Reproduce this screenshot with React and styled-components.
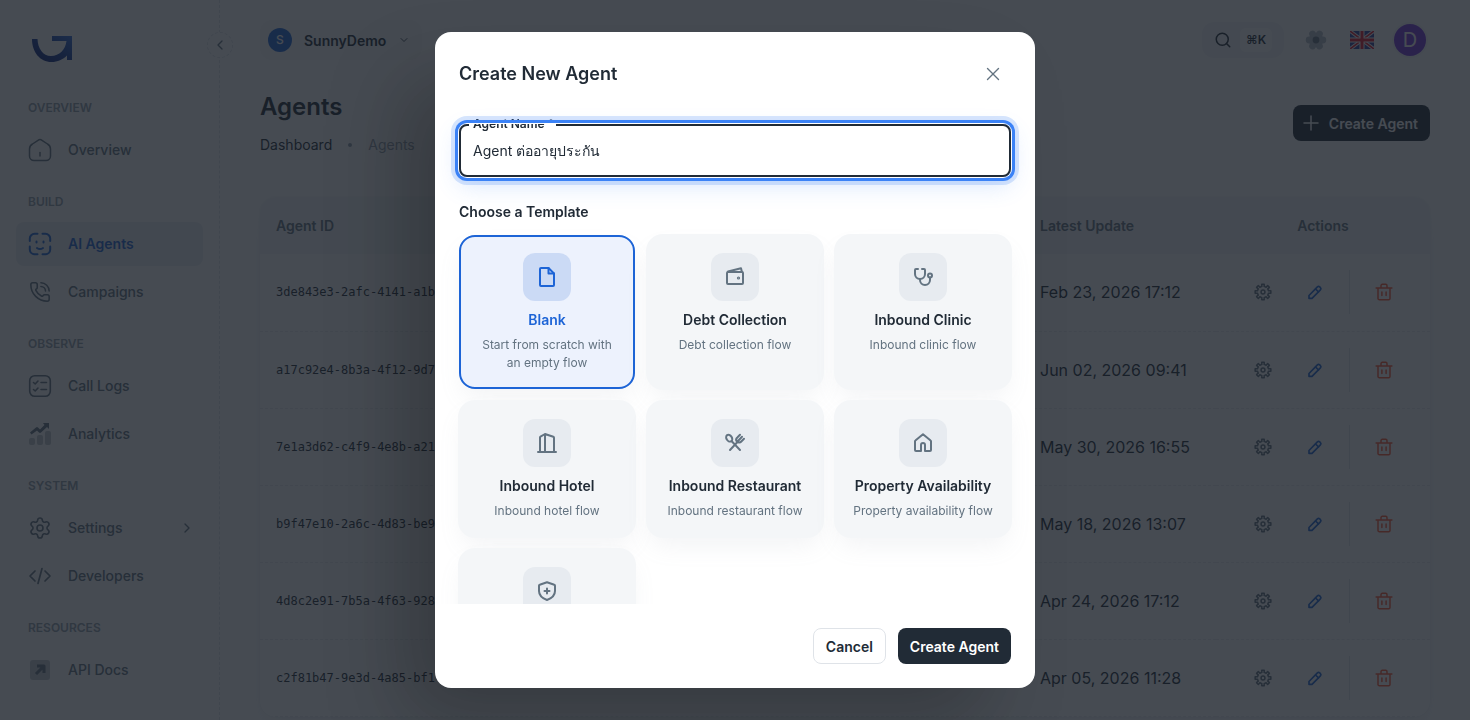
import React, { useState } from "react";
import { createGlobalStyle, styled } from "styled-components";
import { ChevronDown, ChevronLeft, ChevronRight, PhoneCall, Plus, Search, Settings, X } from "lucide-react";

const GlobalStyle = createGlobalStyle`
  * {
    box-sizing: border-box;
  }
  body {
    margin: 0;
    overflow: hidden;
    background: #ffffff;
    color: #212b36;
    font-family: Inter, "Noto Sans", sans-serif;
    font-size: 14px;
    line-height: 22px;
  }
  button, input {
    font-family: inherit;
  }
  button {
    cursor: pointer;
  }
  a {
    color: inherit;
    text-decoration: none;
  }
`;

const Line = ({ size = 24, width = 2, children }) => (
  <svg
    width={size}
    height={size}
    viewBox="0 0 24 24"
    fill="none"
    stroke="currentColor"
    strokeWidth={width}
    strokeLinecap="round"
    strokeLinejoin="round"
    aria-hidden="true"
  >
    {children}
  </svg>
);

const Logo = () => (
  <svg width="40" height="26" viewBox="0 0 40 26" aria-hidden="true">
    <defs>
      <linearGradient id="logo" x1="0" y1="1" x2="1" y2="0">
        <stop offset="0" stopColor="#0a1a6e" />
        <stop offset="0.55" stopColor="#123a9c" />
        <stop offset="1" stopColor="#2f6ad8" />
      </linearGradient>
    </defs>
    <path
      fill="url(#logo)"
      d="M0 3h5.500c.3 9.500 5.500 17 13.500 17 8.500 0 14.500-6.500 15.500-15H20V0h20v24h-5v-4.500c-4 4-9.500 6.500-15.500 6.500C8 26 0 16 0 3z"
    />
  </svg>
);

const HomeIcon = () => (
  <Line width={1.5}>
    <path d="M4.500 6 10 2.300a3.500 3.500 0 0 1 4 0L19.500 6a6 6 0 0 1 3 5v7a4.500 4.500 0 0 1-4.500 4.500H6A4.500 4.500 0 0 1 1.500 18v-7a6 6 0 0 1 3-5z" />
    <path d="M12 14.500V18" />
  </Line>
);

const AgentIcon = () => (
  <Line width={2}>
    <path d="M1.800 9V6.500A4.700 4.700 0 0 1 6.500 1.800H9.500M14.500 1.800h3a4.700 4.700 0 0 1 4.700 4.700V9M22.200 14.500v3a4.700 4.700 0 0 1-4.700 4.700h-3M9.500 22.200h-3a4.700 4.700 0 0 1-4.700-4.700v-3" />
    <path d="M8.500 9.500v1M15.500 9.500v1M9 16c1.800 1.300 4.200 1.300 6 0" />
  </Line>
);

const LogsIcon = () => (
  <Line width={1.600}>
    <rect x="1.700" y="1.700" width="20.600" height="20.600" rx="5" />
    <path d="m5.500 8.500 1.700 1.500L10 7M5.500 15.500 7.200 17l2.800-3M13 8.500h5.500M13 15.500h5.500" />
  </Line>
);

const AnalyticsIcon = () => (
  <Line width={0}>
    <g fill="currentColor">
      <g opacity="0.4">
        <rect x="1" y="16" width="6" height="7" rx="2" />
        <rect x="9" y="13" width="6" height="10" rx="2" />
        <rect x="17" y="9" width="6" height="14" rx="2" />
      </g>
      <path d="M15 1h6v6l-2-2-6 5.500a1.500 1.500 0 0 1-2 0L9 8.500 3.500 12.500 2 10.500l6-5a1.500 1.500 0 0 1 2 0l2 2L16.500 3z" />
    </g>
  </Line>
);

const CodeIcon = () => (
  <Line width={1.700}>
    <path d="m7 7-5 5 5 5M17 7l5 5-5 5M14 4.500l-4 15" />
  </Line>
);

const DocsIcon = () => (
  <Line width={0}>
    <rect x="2" y="2" width="20" height="20" rx="3" fill="currentColor" opacity="0.4" />
    <path d="m8 16 8-8M9 8h7v7" stroke="currentColor" strokeWidth="3" strokeLinecap="butt" />
  </Line>
);

// Outline of a cog: pairs of outer and inner points, one pair per tooth.
const cogPath = (teeth, outer, inner) => {
  const points = [];
  for (let i = 0; i < teeth; i += 1) {
    const step = (Math.PI * 2) / teeth;
    [[-0.2, outer], [0.2, outer], [0.26, inner], [0.74, inner]].forEach(([shift, radius]) => {
      const angle = (i + shift) * step;
      points.push(`${(12 + Math.sin(angle) * radius).toFixed(2)} ${(12 - Math.cos(angle) * radius).toFixed(2)}`);
    });
  }
  return `M${points.join("L")}Z`;
};

const CogIcon = () => (
  <Line size={18} width={2}>
    <path d={cogPath(8, 10.600, 7.600)} />
    <circle cx="12" cy="12" r="2.600" />
  </Line>
);

const PencilIcon = () => (
  <Line size={18} width={2.200}>
    <path d="M4 20.500v-3.800L15.200 5.200a2.200 2.200 0 0 1 3.100 0l.9.900a2.200 2.200 0 0 1 0 3.100L8 20.500z" />
    <path d="m12.800 8 3.800 3.800" />
  </Line>
);

const TrashIcon = () => (
  <Line size={18} width={2}>
    <path d="M1.500 6.500h21M4 6.500V20.500a1.800 1.800 0 0 0 1.800 1.800h12.400a1.800 1.800 0 0 0 1.800-1.800V6.500M8 6V3.500A1.700 1.700 0 0 1 9.700 1.800h4.600A1.700 1.700 0 0 1 16 3.500V6M9.200 12v4.500M14.800 12v4.500" />
  </Line>
);

const FlowerGear = () => (
  <svg width="22" height="22" viewBox="0 0 24 24" aria-hidden="true">
    <g fill="#b4bcc6">
      <circle cx="12" cy="12" r="8" />
      {[0, 60, 120, 180, 240, 300].map((deg) => (
        <circle key={deg} cx="12" cy="4.500" r="3.700" transform={`rotate(${deg + 30} 12 12)`} />
      ))}
    </g>
    <circle cx="12" cy="12" r="3.700" fill="#637381" />
  </svg>
);

const UkFlag = () => (
  <svg width="24" height="18" viewBox="0 0 24 18" aria-hidden="true">
    <path fill="#2a3f9d" d="M0 0h24v18H0z" />
    <path stroke="#ffffff" strokeWidth="3.500" d="m0 0 24 18M24 0 0 18" />
    <path stroke="#e0162b" strokeWidth="1.600" d="m0 0 24 18M24 0 0 18" />
    <path stroke="#ffffff" strokeWidth="5" d="M12 0v18M0 9h24" />
    <path stroke="#e0162b" strokeWidth="3" d="M12 0v18M0 9h24" />
  </svg>
);

const FileIcon = () => (
  <Line>
    <path d="M13.500 3H6a1 1 0 0 0-1 1v16a1 1 0 0 0 1 1h12a1 1 0 0 0 1-1V8.500z" />
    <path d="M13.500 3v5.500H19" />
  </Line>
);

const WalletIcon = () => (
  <Line>
    <rect x="4" y="7" width="16" height="12" rx="1" />
    <path d="m5 6.500 13-3.300.8 3.300" />
    <circle cx="15.500" cy="13" r="0.600" />
  </Line>
);

const StethoscopeIcon = () => (
  <Line>
    <path d="M7 4H5a1 1 0 0 0-1 1v4a5 5 0 0 0 10 0V5a1 1 0 0 0-1-1h-2" />
    <path d="M9 14v1a5 5 0 0 0 10 0v-2.500" />
    <circle cx="19" cy="10.500" r="2" />
  </Line>
);

const BuildingIcon = () => (
  <Line>
    <path d="M3 21h18M5 21V6.500a1 1 0 0 1 .5-.9L10 3v18M10 3l8.300 2.800a1 1 0 0 1 .7 1V21" />
  </Line>
);

const CutleryIcon = () => (
  <Line>
    <ellipse cx="6.200" cy="7.200" rx="2.700" ry="3.700" transform="rotate(-35 6.200 7.200)" />
    <path d="m8.500 10 8.500 9M7 19l7-7.500" />
    <path d="m17 3.800-2.700 2.700a3 3 0 0 0-.3 4.200 3 3 0 0 0 4.300-.2L21 7.700M19 5.800l-4 4.200" />
  </Line>
);

const HouseIcon = () => (
  <Line>
    <path d="M4 10.300a1 1 0 0 1 .4-.8L12 3.300l7.600 6.200a1 1 0 0 1 .4.800V19a1 1 0 0 1-1 1h-5v-6a2 2 0 0 0-4 0v6H5a1 1 0 0 1-1-1z" />
  </Line>
);

const ShieldIcon = () => (
  <Line>
    <path d="m12 3.300 7.300 2.500a1 1 0 0 1 .7 1V12c0 4-3.200 7.200-8 9-4.800-1.800-8-5-8-9V6.800a1 1 0 0 1 .7-1z" />
    <path d="M12 9.500v5M9.500 12h5" />
  </Line>
);

const navGroups = [
  { title: "Overview", items: [{ label: "Overview", icon: <HomeIcon /> }] },
  {
    title: "Build",
    items: [
      { label: "AI Agents", icon: <AgentIcon />, active: true },
      { label: "Campaigns", icon: <PhoneCall size={22} strokeWidth={1.7} /> },
    ],
  },
  {
    title: "Observe",
    items: [
      { label: "Call Logs", icon: <LogsIcon /> },
      { label: "Analytics", icon: <AnalyticsIcon /> },
    ],
  },
  {
    title: "System",
    items: [
      { label: "Settings", icon: <Settings size={24} strokeWidth={1.6} />, more: true },
      { label: "Developers", icon: <CodeIcon /> },
    ],
  },
  { title: "Resources", items: [{ label: "API Docs", icon: <DocsIcon /> }] },
];

const agents = [
  { id: "3de843e3-2afc-4141-a1b", updated: "Feb 23, 2026 17:12" },
  { id: "a17c92e4-8b3a-4f12-9d7", updated: "Jun 02, 2026 09:41" },
  { id: "7e1a3d62-c4f9-4e8b-a21", updated: "May 30, 2026 16:55" },
  { id: "b9f47e10-2a6c-4d83-be9", updated: "May 18, 2026 13:07" },
  { id: "4d8c2e91-7b5a-4f63-928", updated: "Apr 24, 2026 17:12" },
  { id: "c2f81b47-9e3d-4a85-bf1", updated: "Apr 05, 2026 11:28" },
];

const templates = [
  { key: "blank", name: "Blank", text: "Start from scratch with an empty flow", icon: <FileIcon /> },
  { key: "debt", name: "Debt Collection", text: "Debt collection flow", icon: <WalletIcon /> },
  { key: "clinic", name: "Inbound Clinic", text: "Inbound clinic flow", icon: <StethoscopeIcon /> },
  { key: "hotel", name: "Inbound Hotel", text: "Inbound hotel flow", icon: <BuildingIcon /> },
  { key: "restaurant", name: "Inbound Restaurant", text: "Inbound restaurant flow", icon: <CutleryIcon /> },
  { key: "property", name: "Property Availability", text: "Property availability flow", icon: <HouseIcon /> },
  { key: "shield", icon: <ShieldIcon /> },
];

const Sidebar = () => (
  <Aside>
    <LogoLink href="#" aria-label="Home">
      <Logo />
    </LogoLink>
    <CollapseButton type="button" aria-label="Collapse menu">
      <ChevronLeft size={16} />
    </CollapseButton>
    <nav>
      {navGroups.map((group) => (
        <div key={group.title}>
          <NavTitle>{group.title}</NavTitle>
          <NavList>
            {group.items.map((item) => (
              <li key={item.label}>
                <NavLink href="#" $active={item.active}>
                  <NavIcon>{item.icon}</NavIcon>
                  <NavLabel>{item.label}</NavLabel>
                  {item.more && <ChevronRight size={16} />}
                </NavLink>
              </li>
            ))}
          </NavList>
        </div>
      ))}
    </nav>
  </Aside>
);

const Topbar = () => (
  <Header>
    <WorkspaceButton type="button">
      <WorkspaceBadge>S</WorkspaceBadge>
      SunnyDemo
      <ChevronDown size={12} />
    </WorkspaceButton>
    <HeaderTools>
      <SearchButton type="button" aria-label="Search">
        <Search size={18} />
        <Shortcut>⌘K</Shortcut>
      </SearchButton>
      <PlainButton type="button" aria-label="Display settings">
        <FlowerGear />
      </PlainButton>
      <PlainButton type="button" aria-label="Language">
        <UkFlag />
      </PlainButton>
      <Avatar type="button" aria-label="Account">D</Avatar>
    </HeaderTools>
  </Header>
);

const AgentsTable = () => (
  <TableCard>
    <Table>
      <thead>
        <tr>
          <HeadCell>Agent ID</HeadCell>
          <HeadCell $width="192px">Latest Update</HeadCell>
          <HeadCell $width="214px" $center>Actions</HeadCell>
        </tr>
      </thead>
      <tbody>
        {agents.map((agent) => (
          <Row key={agent.id}>
            <Cell $mono>{agent.id}</Cell>
            <Cell>{agent.updated}</Cell>
            <Cell>
              <Actions>
                <ActionButton type="button" aria-label="Configure" $color="#637381">
                  <CogIcon />
                </ActionButton>
                <ActionButton type="button" aria-label="Edit" $color="#1d64d6">
                  <PencilIcon />
                </ActionButton>
                <ActionDivider />
                <ActionButton type="button" aria-label="Delete" $color="#ff5630">
                  <TrashIcon />
                </ActionButton>
              </Actions>
            </Cell>
          </Row>
        ))}
      </tbody>
    </Table>
  </TableCard>
);

const CreateAgentDialog = () => {
  const [name, setName] = useState("Agent ต่ออายุประกัน");
  const [selected, setSelected] = useState("blank");
  return (
    <Backdrop>
      <Dialog role="dialog" aria-modal="true" aria-labelledby="dialog-title">
        <DialogHeader>
          <DialogTitle id="dialog-title">Create New Agent</DialogTitle>
          <CloseButton type="button" aria-label="Close">
            <X size={22} strokeWidth={1.5} />
          </CloseButton>
        </DialogHeader>
        <DialogBody>
          <Field>
            <FieldLabel htmlFor="agent-name">Agent Name *</FieldLabel>
            <FieldInput id="agent-name" value={name} onChange={(e) => setName(e.target.value)} />
            <Notch aria-hidden="true">
              <legend />
            </Notch>
          </Field>
          <SectionTitle id="template-title">Choose a Template</SectionTitle>
          <TemplateGrid role="group" aria-labelledby="template-title">
            {templates.map((item) => (
              <TemplateCard
                key={item.key}
                type="button"
                aria-pressed={selected === item.key}
                $selected={selected === item.key}
                onClick={() => setSelected(item.key)}
              >
                <TemplateIcon $selected={selected === item.key}>{item.icon}</TemplateIcon>
                <TemplateName>{item.name}</TemplateName>
                <TemplateText>{item.text}</TemplateText>
              </TemplateCard>
            ))}
          </TemplateGrid>
        </DialogBody>
        <DialogFooter>
          <OutlineButton type="button">Cancel</OutlineButton>
          <DarkButton type="button">Create Agent</DarkButton>
        </DialogFooter>
      </Dialog>
    </Backdrop>
  );
};

const App = () => (
  <>
    <GlobalStyle />
    <Layout>
      <Sidebar />
      <Main>
        <Topbar />
        <PageHead>
          <div>
            <PageTitle>Agents</PageTitle>
            <Breadcrumb aria-label="Breadcrumb">
              <a href="#">Dashboard</a>
              <Dot />
              <Current>Agents</Current>
            </Breadcrumb>
          </div>
          <DarkButton type="button" $icon>
            <Plus size={24} strokeWidth={1.5} />
            Create Agent
          </DarkButton>
        </PageHead>
        <AgentsTable />
      </Main>
    </Layout>
    <CreateAgentDialog />
  </>
);

export default App;

const Layout = styled.div`
  display: flex;
  height: 100vh;
`;
const Aside = styled.aside`
  position: relative;
  width: 220px;
  flex-shrink: 0;
  padding: 36px 16px 16px;
  border-right: 1px dashed #dfe3e8;
`;
const LogoLink = styled.a`
  display: block;
  height: 42px;
  padding-left: 16px;
`;
const CollapseButton = styled.button`
  position: absolute;
  top: 32px;
  right: -14px;
  width: 26px;
  height: 26px;
  padding: 0;
  display: flex;
  align-items: center;
  justify-content: center;
  border: 1px dashed #dfe3e8;
  border-radius: 50%;
  background: #ffffff;
  color: #637381;
`;
const NavTitle = styled.div`
  padding: 21px 12px 11px;
  color: #919eab;
  font-size: 12px;
  font-weight: 600;
  line-height: 18px;
  text-transform: uppercase;
`;
const NavList = styled.ul`
  margin: 0;
  padding: 0;
  display: flex;
  flex-direction: column;
  gap: 4px;
  list-style: none;
`;
const NavLink = styled.a`
  height: 44px;
  padding: 0 8px 0 12px;
  display: flex;
  align-items: center;
  gap: 16px;
  border-radius: 8px;
  color: ${(props) => (props.$active ? "#1d64d6" : "#637381")};
  background: ${(props) => (props.$active ? "#eceff2" : "transparent")};
  font-weight: ${(props) => (props.$active ? 600 : 500)};
`;
const NavIcon = styled.span`
  width: 24px;
  height: 24px;
  display: flex;
  align-items: center;
  justify-content: center;
`;
const NavLabel = styled.span`
  flex: 1;
`;
const Main = styled.main`
  flex: 1;
  min-width: 0;
  padding: 0 40px;
`;
const Header = styled.header`
  height: 80px;
  display: flex;
  align-items: center;
  justify-content: space-between;
`;
const WorkspaceButton = styled.button`
  height: 40px;
  padding: 0 8px;
  display: flex;
  align-items: center;
  gap: 12px;
  border: none;
  border-radius: 12px;
  background: #f7f8f9;
  color: #212b36;
  font-size: 14px;
  font-weight: 600;

  svg {
    margin: 0 4px 0 0;
    color: #454f5b;
  }
`;
const WorkspaceBadge = styled.span`
  width: 24px;
  height: 24px;
  border-radius: 50%;
  background: #1d64d6;
  color: #ffffff;
  font-size: 12px;
  font-weight: 500;
  line-height: 24px;
`;
const HeaderTools = styled.div`
  padding-right: 4px;
  display: flex;
  align-items: center;
  gap: 18px;
`;
const SearchButton = styled.button`
  height: 36px;
  padding: 0 12px;
  display: flex;
  align-items: center;
  gap: 8px;
  border: none;
  border-radius: 12px;
  background: #f4f6f8;
  color: #212b36;
`;
const Shortcut = styled.span`
  width: 32px;
  height: 24px;
  border-radius: 6px;
  background: #ffffff;
  font-size: 12px;
  font-weight: 600;
  line-height: 24px;
`;
const PlainButton = styled.button`
  width: 28px;
  height: 28px;
  padding: 0;
  display: flex;
  align-items: center;
  justify-content: center;
  border: none;
  background: none;
`;
const Avatar = styled.button`
  width: 32px;
  height: 32px;
  padding: 0;
  border: none;
  border-radius: 50%;
  background: #7635dc;
  box-shadow: 0 0 0 2px #f4f6f8;
  color: #ffffff;
  font-size: 20px;
  line-height: 32px;
`;
const PageHead = styled.div`
  padding-top: 9px;
  display: flex;
  align-items: flex-start;
  justify-content: space-between;

  > button {
    margin-top: 16px;
  }
`;
const PageTitle = styled.h1`
  margin: 0;
  font-size: 24px;
  font-weight: 600;
  line-height: 36px;
`;
const Breadcrumb = styled.nav`
  height: 72px;
  padding-top: 9px;
  display: flex;
  gap: 16px;
`;
const Dot = styled.span`
  width: 4px;
  height: 4px;
  margin-top: 9px;
  border-radius: 50%;
  background: #919eab;
`;
const Current = styled.span`
  color: #919eab;
`;
const TableCard = styled.div`
  overflow: hidden;
  border-radius: 16px;
  box-shadow: 0 0 2px rgba(145, 158, 171, 0.2), 0 12px 24px -4px rgba(145, 158, 171, 0.12);
`;
const Table = styled.table`
  width: 100%;
  border-collapse: collapse;
  table-layout: fixed;
`;
const HeadCell = styled.th`
  width: ${(props) => props.$width || "auto"};
  height: 57px;
  padding: 0 16px;
  background: #f4f6f8;
  color: #637381;
  font-weight: 600;
  text-align: ${(props) => (props.$center ? "center" : "left")};
`;
const Row = styled.tr`
  border-bottom: 1px dashed #e9ecef;
`;
const Cell = styled.td`
  height: 77px;
  padding: 0 16px;
  font-size: ${(props) => (props.$mono ? "12px" : "16px")};
  font-family: ${(props) => (props.$mono ? '"DejaVu Sans Mono", monospace' : "inherit")};
  white-space: nowrap;
`;
const Actions = styled.div`
  padding-left: 13px;
  display: flex;
  align-items: center;
  gap: 16px;
`;
const ActionButton = styled.button`
  width: 36px;
  height: 36px;
  padding: 0;
  display: flex;
  align-items: center;
  justify-content: center;
  border: none;
  background: none;
  color: ${(props) => props.$color};
`;
const ActionDivider = styled.span`
  width: 1px;
  height: 44px;
  background: #dfe3e8;
`;
const DarkButton = styled.button`
  height: 36px;
  padding: ${(props) => (props.$icon ? "0 12px 0 6px" : "0 12px")};
  display: flex;
  align-items: center;
  gap: 6px;
  border: none;
  border-radius: 8px;
  background: #212b36;
  color: #ffffff;
  font-size: 14px;
  font-weight: 600;
`;
const OutlineButton = styled(DarkButton)`
  border: 1px solid #dfe3e8;
  background: #ffffff;
  color: #212b36;
`;
const Backdrop = styled.div`
  position: fixed;
  inset: 0;
  padding: 32px;
  display: flex;
  align-items: center;
  justify-content: center;
  overflow: hidden;
  background: rgba(24, 30, 39, 0.8);
`;
const Dialog = styled.div`
  width: 100%;
  max-width: 600px;
  max-height: 100%;
  display: flex;
  flex-direction: column;
  overflow: hidden;
  border-radius: 16px;
  background: #ffffff;
  box-shadow: -40px 40px 80px -8px rgba(0, 0, 0, 0.24);
`;
const DialogHeader = styled.div`
  padding: 24px 24px 8px;
  display: flex;
  align-items: center;
  justify-content: space-between;
`;
const DialogTitle = styled.h2`
  margin: 0;
  font-size: 18px;
  font-weight: 600;
  line-height: 28px;
`;
const CloseButton = styled(PlainButton)`
  width: 36px;
  height: 36px;
  color: #637381;
`;
const DialogBody = styled.div`
  flex: 1;
  min-height: 0;
  padding: 24px;
  overflow-y: auto;
  scrollbar-width: none;
`;
const Field = styled.div`
  position: relative;
  margin-bottom: 24px;
`;
const FieldLabel = styled.label`
  position: absolute;
  top: -9px;
  left: 14px;
  font-size: 12px;
  font-weight: 600;
  line-height: 18px;
`;
const FieldInput = styled.input`
  position: relative;
  width: 100%;
  height: 53px;
  padding: 0 14px;
  display: block;
  border: none;
  border-radius: 8px;
  outline: none;
  background: transparent;
  box-shadow: 0 0 0 1px #ffffff, 0 0 0 4px #3b82f6, 0 0 0 8px rgba(59, 130, 246, 0.2),
    0 8px 24px rgba(59, 130, 246, 0.2);
  color: #212b36;
  font-size: 14px;
  line-height: 22px;
`;
const Notch = styled.fieldset`
  position: absolute;
  inset: -5px 0 0;
  min-width: 0;
  margin: 0;
  padding: 0 8px;
  border: 2px solid #212b36;
  border-radius: 8px;
  pointer-events: none;

  legend {
    width: 87px;
    height: 11px;
    padding: 0;
  }
`;
const SectionTitle = styled.h3`
  margin: 0 0 12px;
  font-size: 14px;
  font-weight: 600;
  line-height: 22px;
`;
const TemplateGrid = styled.div`
  display: grid;
  grid-template-columns: repeat(3, 1fr);
  gap: 12px;
`;
const TemplateCard = styled.button`
  min-height: 136px;
  padding: 16px 14px 15px;
  display: flex;
  flex-direction: column;
  align-items: center;
  border: 2px solid ${(props) => (props.$selected ? "#1d64d6" : "#f4f6f8")};
  border-radius: 16px;
  background: ${(props) => (props.$selected ? "#edf2fd" : "#f4f6f8")};
  box-shadow: 0 0 0 ${(props) => (props.$selected ? "0" : "1px")} #f4f6f8,
    0 12px 24px -4px rgba(145, 158, 171, 0.12);
  color: ${(props) => (props.$selected ? "#1d64d6" : "#212b36")};
`;
const TemplateIcon = styled.span`
  width: 48px;
  height: 48px;
  margin-bottom: 8px;
  display: flex;
  align-items: center;
  justify-content: center;
  border-radius: 12px;
  background: ${(props) => (props.$selected ? "#cbdaf5" : "#e7ebf0")};
  color: ${(props) => (props.$selected ? "#1d64d6" : "#637381")};
`;
const TemplateName = styled.span`
  margin-bottom: 5px;
  font-size: 14px;
  font-weight: 600;
  line-height: 22px;
`;
const TemplateText = styled.span`
  color: #637381;
  font-size: 12px;
  line-height: 18px;
`;
const DialogFooter = styled.div`
  padding: 24px;
  display: flex;
  justify-content: flex-end;
  gap: 12px;
`;
